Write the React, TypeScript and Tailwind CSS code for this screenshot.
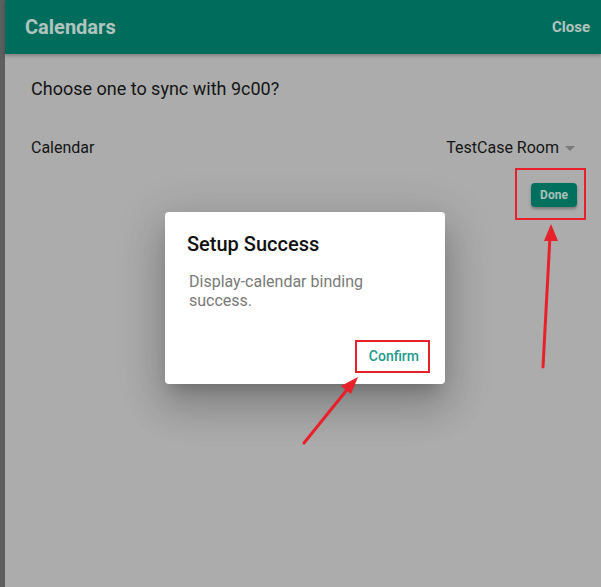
import React from 'react';

const Annotations: React.FC = () => (
  <svg className="absolute inset-0 pointer-events-none" width="601" height="587" viewBox="0 0 601 587">
    <rect x="516" y="169" width="69" height="50" fill="none" stroke="#e8202a" strokeWidth="2" />
    <rect x="356" y="341" width="73" height="31" fill="none" stroke="#e8202a" strokeWidth="2" />
    <line x1="543" y1="367" x2="550" y2="236" stroke="#e8202a" strokeWidth="3" strokeLinecap="round" />
    <polygon points="551,224 544,241 558,241" fill="#e8202a" />
    <line x1="304" y1="443" x2="350" y2="386" stroke="#e8202a" strokeWidth="3" strokeLinecap="round" />
    <polygon points="358,377 341,386 351,394" fill="#e8202a" />
  </svg>
);

const App: React.FC = () => {
  return (
    <div className="relative flex h-[587px] w-[601px] overflow-hidden bg-[#acacac] font-['Roboto',sans-serif]">
      <div className="w-[5px] shrink-0 bg-[#5e5e5e]" />
      <div className="flex flex-1 flex-col">
        <header className="flex h-[54px] items-center justify-between bg-[#006c5c] pl-5 pr-[11px] shadow-[0_2px_3px_rgba(0,0,0,0.25)]">
          <h1 className="text-[20px] font-bold text-[#b0c4bf]">Calendars</h1>
          <button className="text-[15px] font-bold text-[#b0c4bf]">Close</button>
        </header>
        <div className="flex flex-col pl-[26px] pr-[26px]">
          <p className="mt-[24px] text-[18px] leading-[22px] text-[#151515]">Choose one to sync with 9c00?</p>
          <div className="mt-[36px] flex items-center justify-between">
            <span className="text-[16px] text-[#151515]">Calendar</span>
            <div className="flex items-center gap-[6px]">
              <span className="text-[16px] text-[#151515]">TestCase Room</span>
              <span className="h-0 w-0 border-x-[5px] border-t-[5px] border-x-transparent border-t-[#7a7a7a]" />
            </div>
          </div>
          <div className="mt-[23px] -mr-[2px] flex justify-end">
            <button className="h-[24px] w-[46px] rounded-[4px] bg-[#00705e] text-[12px] font-bold text-[#a9c2bb] shadow-[0_2px_3px_rgba(0,0,0,0.3)]">
              Done
            </button>
          </div>
        </div>
      </div>

      <div className="absolute left-[165px] top-[212px] flex h-[172px] w-[280px] flex-col rounded-[4px] bg-white shadow-[0_11px_15px_-7px_rgba(0,0,0,0.2),0_24px_38px_3px_rgba(0,0,0,0.14),0_9px_46px_8px_rgba(0,0,0,0.12)]">
        <h2 className="px-[22px] pt-[20px] text-[20px] font-medium leading-[24px] text-[#111]">Setup Success</h2>
        <p className="mt-[16px] px-[24px] text-[16px] leading-[19px] text-[#7a7a7a]">Display-calendar binding success.</p>
        <div className="mt-auto flex justify-end px-[20px] pb-[10px]">
          <button className="h-[36px] px-[6px] text-[14px] font-medium text-[#1f9a8c]">Confirm</button>
        </div>
      </div>

      <Annotations />
    </div>
  );
};

export default App;
